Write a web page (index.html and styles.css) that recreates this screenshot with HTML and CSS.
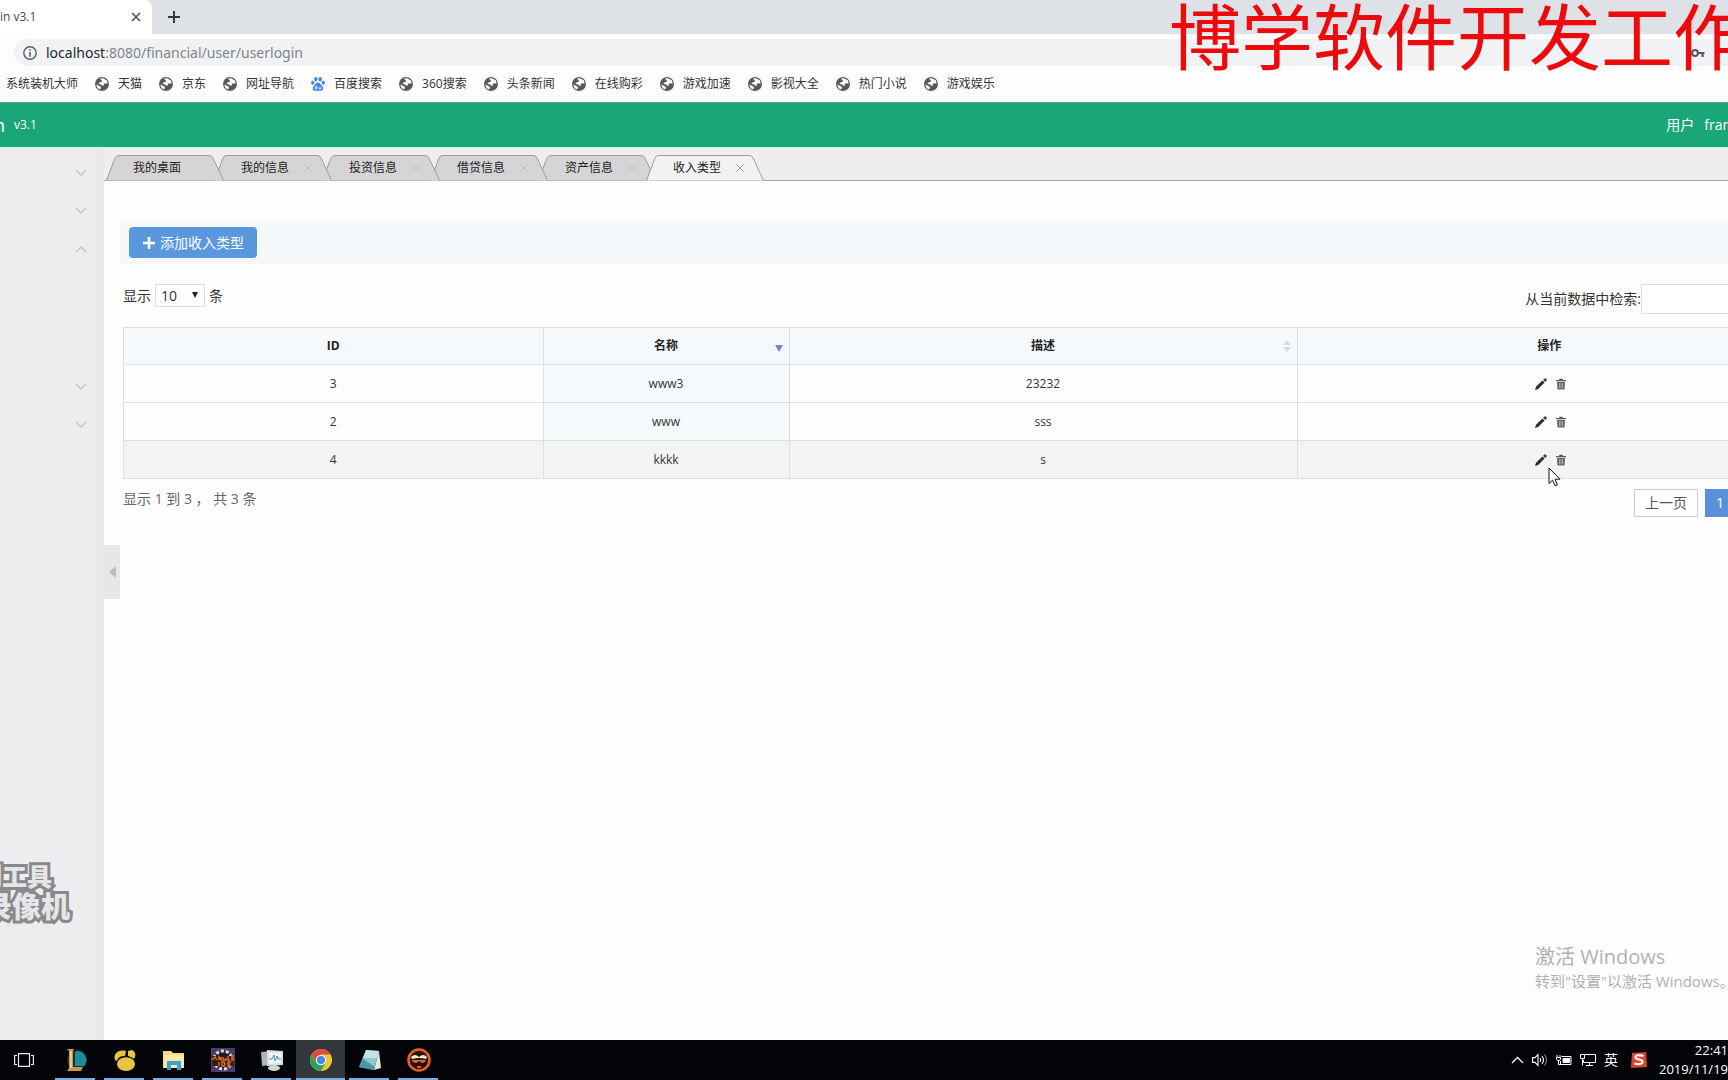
FILE: index.html
```html
<!DOCTYPE html>
<html lang="zh-CN">
<head>
<meta charset="utf-8">
<title>v3.1</title>
<link rel="stylesheet" href="styles.css">
</head>
<body>
<svg class="defs" aria-hidden="true">
  <symbol id="globe" viewBox="0 0 14 14"><circle cx="7" cy="7" r="7" fill="#56595d"/><path d="M5 1.5 8 1.2 12 3.5 12.6 7 11 6.2 8.6 6.8 9 8.6 7.6 8.8 6 7.5 3.2 6.6 5.6 5 7.4 4.6 6.5 3.2Z" fill="#fff"/><path d="M1.2 7.5 4.4 9 6 10 5.2 12.6 2.6 11.2Z" fill="#fff"/></symbol>
  <symbol id="cross" viewBox="0 0 10 10"><path d="M1.5 1.5 8.5 8.5M8.5 1.5 1.5 8.5" fill="none" stroke="currentColor"/></symbol>
  <symbol id="tabshape" viewBox="0 0 118 26"><path d="M.5 25.5 9 3Q10 .5 13 .5H103Q106 .5 107 3L117.500 25.500" stroke="#999c9f"/></symbol>
  <symbol id="down" viewBox="0 0 12 8"><path d="M1 1 6 6 11 1" fill="none" stroke="#c3c5c7" stroke-width="1.500"/></symbol>
  <symbol id="up" viewBox="0 0 12 8"><path d="M1 7 6 2 11 7" fill="none" stroke="#c3c5c7" stroke-width="1.500"/></symbol>
  <symbol id="pencil" viewBox="0 0 12 12"><path d="M0 12 1 8.800 7.400 2.400 9.600 4.600 3.200 11Z" fill="#2b2e30"/><path d="M8.100 1.700 9.500.4Q10-.1 10.600.4L11.600 1.400Q12.100 2 11.600 2.500L10.300 3.900Z" fill="#3b3e40"/></symbol>
  <symbol id="trash" viewBox="0 0 12 12"><path d="M1 2H4L4.500.700H7.500L8 2H11V3.300H1Z" fill="#55595e"/><path d="M2 4H10L9.500 11.500H2.500Z" fill="#62666b"/><path d="M4.500 5V10.300M6 5V10.300M7.500 5V10.300" stroke="#c2c6ca" stroke-width=".7"/></symbol>
</svg>

<div class="browser">
  <div class="tabstrip">
    <div class="btab"><span>in v3.1</span>
      <button class="icon-btn" aria-label="关闭"><svg width="12" height="12" viewBox="0 0 12 12"><path d="M2 2 10 10M10 2 2 10" stroke="#54575b" stroke-width="1.700"/></svg></button>
    </div>
    <button class="icon-btn newtab" aria-label="新标签页"><svg width="14" height="14" viewBox="0 0 14 14"><path d="M7 1V13M1 7H13" stroke="#35383b" stroke-width="2"/></svg></button>
  </div>
  <div class="address">
    <svg width="14" height="14" viewBox="0 0 14 14"><circle cx="7" cy="7" r="6.200" fill="none" stroke="#5a5d61" stroke-width="1.400"/><path d="M7 3.200V4.800M7 6V10.800" stroke="#5a5d61" stroke-width="1.600"/></svg>
    <p class="url">localhost<span>:8080/financial/user/userlogin</span></p>
    <svg class="key" width="14" height="10" viewBox="0 0 14 10"><circle cx="4" cy="5" r="2.900" fill="none" stroke="#54575b" stroke-width="2"/><path d="M6.500 5H13.500M11.500 5V9" stroke="#54575b" stroke-width="2.200"/></svg>
  </div>
  <nav class="bookmarks">
    <a href="#">系统装机大师</a>
    <a href="#"><svg><use href="#globe"/></svg>天猫</a>
    <a href="#"><svg><use href="#globe"/></svg>京东</a>
    <a href="#"><svg><use href="#globe"/></svg>网址导航</a>
    <a href="#"><svg viewBox="0 0 14 14" fill="#3f83e6"><ellipse cx="4.900" cy="2.300" rx="1.600" ry="2.200"/><ellipse cx="9.200" cy="2.300" rx="1.600" ry="2.200"/><ellipse cx="1.700" cy="5.700" rx="1.600" ry="2"/><ellipse cx="12.300" cy="5.700" rx="1.600" ry="2"/><path d="M7 5.500C9 5.500 9.500 7.500 11 8.700 13 10.400 12.500 13.600 10 13.800H4C1.500 13.600 1 10.400 3 8.700 4.500 7.500 5 5.500 7 5.500Z"/><path d="M5.800 8.500V12H4.200V10H5.800M8 9.800V12H10V9.800" fill="none" stroke="#fff" stroke-width=".8"/></svg>百度搜索</a>
    <a href="#"><svg><use href="#globe"/></svg>360搜索</a>
    <a href="#"><svg><use href="#globe"/></svg>头条新闻</a>
    <a href="#"><svg><use href="#globe"/></svg>在线购彩</a>
    <a href="#"><svg><use href="#globe"/></svg>游戏加速</a>
    <a href="#"><svg><use href="#globe"/></svg>影视大全</a>
    <a href="#"><svg><use href="#globe"/></svg>热门小说</a>
    <a href="#"><svg><use href="#globe"/></svg>游戏娱乐</a>
  </nav>
</div>

<header class="topbar">
  <p class="brand"><b>n</b><span>v3.1</span></p>
  <p class="user"><span>用户</span><span>fran</span></p>
</header>

<div class="app">
  <aside class="sidebar">
    <ul>
      <li><svg><use href="#down"/></svg></li>
      <li><svg><use href="#down"/></svg></li>
      <li class="open"><svg><use href="#up"/></svg></li>
      <li><svg><use href="#down"/></svg></li>
      <li><svg><use href="#down"/></svg></li>
    </ul>
    <p class="recorder"><span>制工具</span><span class="big">录像机</span></p>
    <button class="collapse" aria-label="收起菜单"><svg width="7" height="12" viewBox="0 0 7 12"><path d="M7 0V12L0 6Z" fill="#bcbcbe"/></svg></button>
  </aside>

  <main>
    <ul class="tabs">
      <li><svg class="shape"><use href="#tabshape"/></svg><a href="#">我的桌面</a></li>
      <li><svg class="shape"><use href="#tabshape"/></svg><a href="#">我的信息</a><button class="icon-btn" aria-label="关闭"><svg><use href="#cross"/></svg></button></li>
      <li><svg class="shape"><use href="#tabshape"/></svg><a href="#">投资信息</a><button class="icon-btn" aria-label="关闭"><svg><use href="#cross"/></svg></button></li>
      <li><svg class="shape"><use href="#tabshape"/></svg><a href="#">借贷信息</a><button class="icon-btn" aria-label="关闭"><svg><use href="#cross"/></svg></button></li>
      <li><svg class="shape"><use href="#tabshape"/></svg><a href="#">资产信息</a><button class="icon-btn" aria-label="关闭"><svg><use href="#cross"/></svg></button></li>
      <li class="active"><svg class="shape"><use href="#tabshape"/></svg><a href="#">收入类型</a><button class="icon-btn" aria-label="关闭"><svg><use href="#cross"/></svg></button></li>
    </ul>

    <div class="panel">
      <div class="actions">
        <button class="add"><svg width="12" height="12" viewBox="0 0 12 12"><path d="M6 0V12M0 6H12" stroke="#fff" stroke-width="2.600"/></svg>添加收入类型</button>
      </div>
      <div class="filters">
        <div class="length"><label for="len">显示</label>
          <span class="select"><select id="len"><option>10</option></select><svg width="6" height="6" viewBox="0 0 6 6"><path d="M0 0H6L3 6Z" fill="#222"/></svg></span>
          <span>条</span></div>
        <div class="search"><label for="q">从当前数据中检索:</label><input id="q" type="text"></div>
      </div>
      <table>
        <colgroup><col class="c-id"><col class="c-name"><col class="c-desc"><col class="c-op"></colgroup>
        <thead>
          <tr><th>ID</th>
            <th>名称<svg class="sort" width="8" height="12" viewBox="0 0 8 12"><path d="M0 5H8L4 12Z" fill="#7d80cf"/></svg></th>
            <th>描述<svg class="sort" width="8" height="12" viewBox="0 0 8 12"><path d="M4 0 8 5H0ZM0 7H8L4 12Z" fill="#d6dbde"/></svg></th>
            <th>操作</th></tr>
        </thead>
        <tbody>
          <tr><td>3</td><td>www3</td><td>23232</td><td class="ops"><a href="#" aria-label="编辑"><svg><use href="#pencil"/></svg></a><a href="#" aria-label="删除"><svg><use href="#trash"/></svg></a></td></tr>
          <tr><td>2</td><td>www</td><td>sss</td><td class="ops"><a href="#" aria-label="编辑"><svg><use href="#pencil"/></svg></a><a href="#" aria-label="删除"><svg><use href="#trash"/></svg></a></td></tr>
          <tr class="hover"><td>4</td><td>kkkk</td><td>s</td><td class="ops"><a href="#" aria-label="编辑"><svg><use href="#pencil"/></svg></a><a href="#" aria-label="删除"><svg><use href="#trash"/></svg></a></td></tr>
        </tbody>
      </table>
      <div class="foot">
        <p>显示 1 到 3 ，&nbsp;共 3 条</p>
        <div class="pager"><button>上一页</button><button class="current">1</button></div>
      </div>
    </div>
  </main>

  <div class="activate"><p class="big">激活 Windows</p><p>转到"设置"以激活 Windows。</p></div>
</div>

<footer class="taskbar">
  <div class="apps">
    <button class="task plain" aria-label="任务视图"><svg width="20" height="14" viewBox="0 0 20 14" fill="none" stroke="#e6e6e6" stroke-width="1.200"><path d="M4.500.6H15.500V13.400H4.500ZM3 2.500H.6V11.500H3M17 2.500H19.400V11.500H17"/></svg></button>
    <button class="task" aria-label="League"><svg width="24" height="24" viewBox="0 0 24 24"><circle cx="13" cy="12" r="10" fill="#10343f"/><path d="M13 3A9 9 0 0 1 20 18L11 18V4Z" fill="#1c8c98"/><path d="M3 1H10L9 3V19H19L17 23H3L5 20V3Z" fill="#c9964a"/><path d="M6 3H8V20H6Z" fill="#ecc88a"/></svg></button>
    <button class="task" aria-label="Navicat"><svg width="24" height="24" viewBox="0 0 24 24" fill="#e8c53f"><ellipse cx="13" cy="16" rx="9" ry="7"/><path d="M2 12C0 6 5 1 13 3L12 8C8 8 5 9 4 13Z"/><path d="M15 3 19 2C23 4 23 8 21 11L15 8Z"/><path d="M4 13C8 8 16 7 22 12" fill="none" stroke="#191408"/></svg></button>
    <button class="task" aria-label="文件资源管理器"><svg width="24" height="24" viewBox="0 0 24 24"><path d="M1 3H9L11 5H22V20H1Z" fill="#f6d77a"/><path d="M2 7H22V20H2Z" fill="#fbe9a0"/><path d="M5 13H19V22H15V17H9V22H5Z" fill="#3aa0d8"/></svg></button>
    <button class="task" aria-label="IDE"><svg width="24" height="24" viewBox="0 0 24 24"><path d="M0 0H24V24H0Z" fill="#4b3c6c"/><circle cx="12" cy="12" r="9" fill="#251c20" stroke="#ddd" stroke-width="3" stroke-dasharray="3 2"/><path d="M1 8H23V18H1Z" fill="#3b1c10"/><path d="M1 12 4 9 6 12M8 12V9L10 12V9M12 9V12H15V10M17 8V12H19M20 8H23M20 10H23M20 12H23M8 14V18M11 14V18H13Q15 16 13 14H11M20 14H17V18H20M17 16H19" fill="none" stroke="#dc7426" stroke-width="1.300"/></svg></button>
    <button class="task" aria-label="监视器"><svg width="24" height="24" viewBox="0 0 24 24"><path d="M1 4 10 3V17L2 18Z" fill="#aeb4b8"/><path d="M7 2 23 3V17L7 18Z" fill="#d8dee1"/><path d="M9 4 21 5V15L9 16Z" fill="#eef6fa"/><path d="M9 11H12L14 7 15 13 17 8 18 11H21" fill="none" stroke="#4c91b4"/><ellipse cx="14" cy="20" rx="6" ry="3" fill="#cfd3d5"/></svg></button>
    <button class="task current" aria-label="Chrome"><svg width="24" height="24" viewBox="0 0 24 24"><circle cx="12" cy="12" r="11" fill="#f4c531"/><path d="M12 12 7.200 14.700 2.500 6.500A11 11 0 0 0 11.800 23L16.800 14.700Z" fill="#2ba25a"/><path d="M2.500 6.500A11 11 0 0 1 21.500 6.500H12L7 14Z" fill="#dd4b3e"/><circle cx="12" cy="12" r="5.200" fill="#fff"/><circle cx="12" cy="12" r="4.200" fill="#4a88e8"/></svg></button>
    <button class="task" aria-label="记事本"><svg width="24" height="24" viewBox="0 0 24 24"><path d="M8 2 21 3 16 22 1 19Z" fill="#8fc5cc"/><path d="M8 2 21 3 19 10 5 10Z" fill="#c4e2e5"/><path d="M21 3 23 20 16 22Z" fill="#e8e8e2"/><path d="M5 11 17 19 16 22 1 19Z" fill="#4d97a5"/></svg></button>
    <button class="task" aria-label="录像机"><svg width="24" height="24" viewBox="0 0 24 24"><circle cx="12" cy="12" r="10.500" fill="#28120c" stroke="#e5602a" stroke-width="2.600"/><path d="M4 9Q8 5 12 9 16 5 20 9L19 11Q12 9 5 11Z" fill="#f0e6dc"/><path d="M5 12H19Q18 15 15 15L12 13 9 15Q6 15 5 12Z" fill="#d96a35"/><path d="M10 18H14V20H10Z" fill="#e5602a"/></svg></button>
  </div>
  <div class="tray">
    <svg width="13" height="8" viewBox="0 0 13 8"><path d="M1 7 6.500 1.500 12 7" fill="none" stroke="#fff" stroke-width="1.300"/></svg>
    <svg width="16" height="14" viewBox="0 0 16 14" fill="none" stroke="#fff" stroke-width="1.100"><path d="M.6 4.600H3L6 1.500V12.500L3 9.400H.6ZM8 5Q9.500 7 8 9M10 3Q13 7 10 11"/><path d="M12.500 1.500Q16.500 7 12.500 12.500" stroke="#888"/></svg>
    <svg width="16" height="12" viewBox="0 0 16 12" fill="none" stroke="#fff"><path d="M5.500 2.500H15V10.500H4.500V7M1 1V3M4 1V3M.5 3.500H4.500V5L3.500 6.500H1.500L.5 5ZM2.500 6.500V10.500H4.500"/><path d="M7 4.500H13.500V8.500H7Z" fill="#fff"/></svg>
    <svg width="16" height="14" viewBox="0 0 16 14" fill="none" stroke="#fff"><path d="M5 1.500H15.500V9.500H3.500V7M9.500 9.500V12.500M6 12.500H13M.5 1.500H4.500V5.500H.5ZM2.500 5.500V12.500"/></svg>
    <span class="ime">英</span>
    <svg class="sogou" width="16" height="16" viewBox="0 0 16 16"><path d="M1 1 15 0 16 15 0 16Z" fill="#d9482c"/><path d="M12.500 4Q5 2 4.500 5 4.500 7 8 7.500 12 8 11.500 10.500 10 13 3.500 11.500" fill="none" stroke="#fff" stroke-width="2.200"/></svg>
    <p class="clock"><span>22:41</span><span>2019/11/19</span></p>
  </div>
</footer>

<p class="banner">博学软件开发工作</p>
<svg class="cursor" width="13" height="20" viewBox="0 0 13 20"><path d="M1 1V16.500L4.500 13.200 7 18.800 9.400 17.800 7 12.200H12Z" fill="#fff" stroke="#111"/></svg>
</body>
</html>
```

FILE: styles.css
```css
* { box-sizing: border-box; }
body {
  margin: 0;
  position: relative;
  min-height: 100vh;
  display: flex;
  flex-direction: column;
  overflow: hidden;
  background: #fefdfe;
  color: #333;
  font: 14px/20px "Open Sans", "Noto Sans CJK SC", sans-serif;
}
p, ul { margin: 0; padding: 0; list-style: none; }
a { color: inherit; text-decoration: none; }
button, input, select { font: inherit; color: inherit; margin: 0; }
svg { display: block; flex: none; }
.defs { position: absolute; width: 0; height: 0; }
.icon-btn { display: flex; padding: 0; border: 0; background: none; }

/* browser chrome */
.tabstrip { display: flex; align-items: center; height: 34px; background: #dee1e6; }
.btab {
  display: flex; align-items: center; justify-content: space-between;
  width: 152px; height: 34px; padding-right: 10px;
  background: #fff; border-radius: 0 8px 0 0;
  font-size: 12px; color: #4a4a4a;
}
.newtab { margin-left: 15px; }
.address {
  display: flex; align-items: center; gap: 9px;
  height: 27px; margin: 5px 0 6px 14px; padding: 0 23px 0 9px;
  background: #f0f2f4; border-radius: 14px 0 0 14px;
}
.url { flex: 1; color: #26282a; font-family: "Noto Sans", sans-serif; }
.url span { color: #808488; }
.bookmarks {
  display: flex; align-items: center; gap: 17px;
  height: 24px; margin-bottom: 6px; padding-left: 6px;
  font-size: 12px; line-height: 18px;
}
.bookmarks a { display: flex; align-items: center; gap: 9px; white-space: nowrap; }
.bookmarks svg { width: 14px; height: 14px; }

/* application header */
.topbar {
  display: flex; align-items: center; justify-content: space-between;
  height: 45px; border-top: 1px solid #7d9990;
  background: #1ba67a; color: #fff;
}
.brand { display: flex; align-items: center; gap: 9px; font-size: 12px; }
.brand b { display: flex; justify-content: flex-end; width: 5px; font-size: 18px; font-weight: 400; }
.user { display: flex; gap: 10px; margin-right: -3px; }

.app { position: relative; flex: 1; display: flex; border-top: 2px solid #dcf5ed; }
.sidebar { position: relative; width: 104px; background: #ededef; border-right: 8px solid #e9e9ea; }
.sidebar ul { display: flex; flex-direction: column; align-items: flex-end; padding: 5px 9px 0 0; }
.sidebar li { display: flex; align-items: center; height: 38px; }
.sidebar li.open { margin-bottom: 100px; }
.sidebar li svg { width: 12px; height: 8px; }
/* right-aligned so the first characters slide under the window edge */
.recorder {
  position: absolute; right: 26px; bottom: 118px;
  display: flex; flex-direction: column; align-items: flex-end;
  font: 900 25px/27px "Noto Sans CJK SC", sans-serif;
  color: #e6e6e8; white-space: nowrap;
  -webkit-text-stroke: 6px #87898b; paint-order: stroke;
}
.recorder span { padding-right: 18px; }
.recorder .big { padding-right: 0; font-size: 29px; line-height: 33px; }
.collapse {
  position: absolute; left: 104px; top: 396px;
  display: flex; align-items: center; justify-content: center;
  width: 16px; height: 54px; padding: 0; border: 0; background: #e8e6e8;
}

main { flex: 1; min-width: 0; }
.tabs {
  display: flex; height: 32px; padding: 6px 0 0 2px;
  background: #eeedef; border-bottom: 1px solid #a5a7a9;
}
.tabs li {
  position: relative; display: flex; align-items: center; gap: 14px;
  width: 108px; height: 26px; padding-left: 27px; font-size: 12px; color: #222;
}
.tabs a, .tabs .icon-btn { position: relative; }
.tabs .icon-btn { color: #bfc0c4; }
.tabs .icon-btn svg { width: 10px; height: 10px; }
.shape { position: absolute; left: 0; top: 0; width: 118px; height: 26px; fill: #d5d4d6; }
.tabs li:nth-child(1) { z-index: 5; }
.tabs li:nth-child(2) { z-index: 4; }
.tabs li:nth-child(3) { z-index: 3; }
.tabs li:nth-child(4) { z-index: 2; }
.tabs li:nth-child(5) { z-index: 1; }
.tabs .active { z-index: 6; }
.active .shape { fill: #f2f1f3; }
.tabs .active .icon-btn { color: #999; }

/* the panel runs past the right edge of the window */
.panel { margin: 39px -74px 0 16px; }
.actions { display: flex; height: 44px; padding: 7px 9px; background: #f4f8fa; }
.add {
  display: flex; align-items: center; gap: 5px;
  height: 31px; padding: 0 13px 0 14px;
  border: 0; border-radius: 4px; background: #5a98de; color: #fff;
}
.filters { display: flex; align-items: flex-start; justify-content: space-between; padding: 20px 0 13px 3px; }
.length { display: flex; align-items: center; gap: 4px; }
.select { position: relative; display: flex; }
.select svg { position: absolute; right: 7px; top: 8px; pointer-events: none; }
.select select {
  appearance: none; width: 50px; height: 23px; padding: 0 5px;
  border: 1px solid #ddd; border-radius: 0; background: #fff; line-height: 20px;
}
.search { display: flex; align-items: center; }
.search input { width: 161px; height: 30px; border: 1px solid #ddd; background: #fff; }

table {
  width: calc(100% - 3px); margin-left: 3px;
  border-collapse: collapse; table-layout: fixed;
  font-size: 12px; text-align: center;
}
.c-id { width: 25%; }
.c-name { width: 246px; }
.c-desc { width: 508px; }
th, td { position: relative; height: 38px; padding: 0; border: 1px solid #dcdfe3; line-height: 18px; }
th { height: 37px; background: #f5f9fc; color: #222; font-weight: 700; }
.sort { position: absolute; right: 6px; top: 12px; }
tbody td:nth-child(2) { background: #f4f9fb; }
tbody .hover td { background: #f3f3f4; }
.ops { padding-left: 4px; }
td a { display: inline-block; margin: 0 4px; vertical-align: middle; }
td svg { width: 12px; height: 12px; }

.foot { display: flex; justify-content: space-between; padding: 10px 67px 0 3px; color: #666; }
.pager { display: flex; gap: 7px; }
.pager button { height: 28px; padding: 0 10px; border: 1px solid #ccc; background: #fff; color: #555; }
.pager .current { border-color: #5a8fdc; background: #5a8fdc; color: #fff; }

.activate { position: absolute; left: calc(100% - 193px); bottom: 49px; color: #b0b0b3; white-space: nowrap; }
.activate p { font-size: 15px; }
.activate .big { font-size: 20px; line-height: 28px; }

/* Windows taskbar */
.taskbar { display: flex; justify-content: space-between; height: 40px; background: #020408; color: #fff; }
.apps { display: flex; }
.task {
  position: relative; display: flex; align-items: center; justify-content: center;
  width: 49px; height: 40px; padding: 0; border: 0; background: none;
}
.task::after { content: ""; position: absolute; left: 4px; right: 5px; bottom: 0; height: 2px; background: #7aaede; }
.task.plain { width: 48px; margin-right: 3px; }
.task.plain::after { display: none; }
.task.current { background: #33363a; }
.task.current::after { left: 0; right: 0; }
.tray { display: flex; align-items: center; gap: 8px; }
.ime { font-size: 14px; }
.sogou { margin-left: 5px; }
.clock { display: flex; flex-direction: column; align-items: flex-end; margin-left: 4px; font-size: 13px; line-height: 19px; }

.banner {
  position: absolute; left: calc(100% - 559px); top: -19px;
  width: 559px; overflow: hidden;
  color: #ee0a0c; white-space: nowrap;
  font: 72px/104px "Noto Sans CJK SC", sans-serif;
}
.cursor { position: absolute; left: calc(100% - 180px); top: 467px; }
```
